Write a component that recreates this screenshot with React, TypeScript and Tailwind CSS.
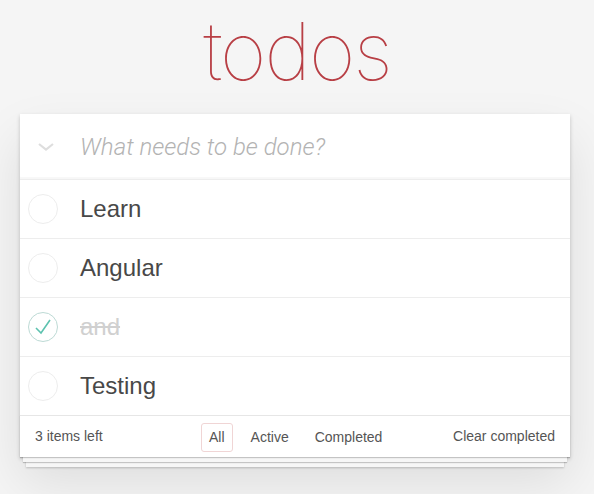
import React from 'react';

type Todo = { title: string; done: boolean };

const todos: Todo[] = [
  { title: 'Learn', done: false },
  { title: 'Angular', done: false },
  { title: 'and', done: true },
  { title: 'Testing', done: false },
];

const Toggle: React.FC<{ done: boolean }> = ({ done }) => (
  <div
    className={`w-[30px] h-[30px] rounded-full border flex items-center justify-center ${
      done ? 'border-[#bddad5]' : 'border-[#ededed]'
    }`}
  >
    {done && (
      <svg width="20" height="20" viewBox="0 0 20 20" fill="none">
        <path d="M3 11 L8 16 L17 3" stroke="#5dc2af" strokeWidth="1.6" />
      </svg>
    )}
  </div>
);

const App: React.FC = () => {
  return (
    <div className="min-h-[494px] bg-[#f5f5f5] font-['Helvetica_Neue','Liberation_Sans',sans-serif] text-[#484848]">
      {/* TITLE */}
      <h1 className="h-[114px] pt-[11px] text-center text-[80px] leading-[80px] font-thin tracking-[-2px] text-[#b83f45] font-['Inter',sans-serif]">
        todos
      </h1>

      {/* APP CARD */}
      <section className="ml-5 w-[550px] bg-white shadow-[0_2px_4px_0_rgba(0,0,0,0.2),0_25px_50px_0_rgba(0,0,0,0.1)]">
        <header className="h-[65px] flex items-center shadow-[inset_0_-2px_1px_rgba(0,0,0,0.03)]">
          <div className="w-[60px] flex justify-center">
            <svg width="18" height="10" viewBox="0 0 18 10" fill="none" className="ml-[-8px]">
              <path d="M2 2 L9 7.5 L16 2" stroke="#dedede" strokeWidth="2.2" />
            </svg>
          </div>
          <span className="text-[24px] italic font-light text-[#b3b3b3] font-['Roboto',sans-serif]">
            What needs to be done?
          </span>
        </header>

        <ul>
          {todos.map((t) => (
            <li key={t.title} className="h-[59px] flex items-center border-t border-[#ededed]">
              <div className="w-[60px] pl-2">
                <Toggle done={t.done} />
              </div>
              <span
                className={`text-[24px] ${t.done ? 'line-through text-[#d0d0d0]' : 'text-[#484848]'}`}
              >
                {t.title}
              </span>
            </li>
          ))}
        </ul>

        <footer className="relative h-[42px] px-[15px] flex items-center justify-between border-t border-[#e6e6e6] text-[14px] text-[#555] font-light shadow-[0_1px_1px_rgba(0,0,0,0.2),0_8px_0_-3px_#f6f6f6,0_9px_1px_-3px_rgba(0,0,0,0.2),0_16px_0_-6px_#f6f6f6,0_17px_2px_-6px_rgba(0,0,0,0.2)]">
          <span>3 items left</span>
          <div className="absolute left-[181px] top-[7px] flex items-center gap-[10px]">
            <span className="px-[7px] py-[3px] rounded-[3px] border border-[#f0d5d5]">All</span>
            <span className="px-[7px] py-[3px] rounded-[3px] border border-transparent">Active</span>
            <span className="px-[7px] py-[3px] rounded-[3px] border border-transparent">Completed</span>
          </div>
          <span>Clear completed</span>
        </footer>
      </section>
    </div>
  );
};

export default App;
